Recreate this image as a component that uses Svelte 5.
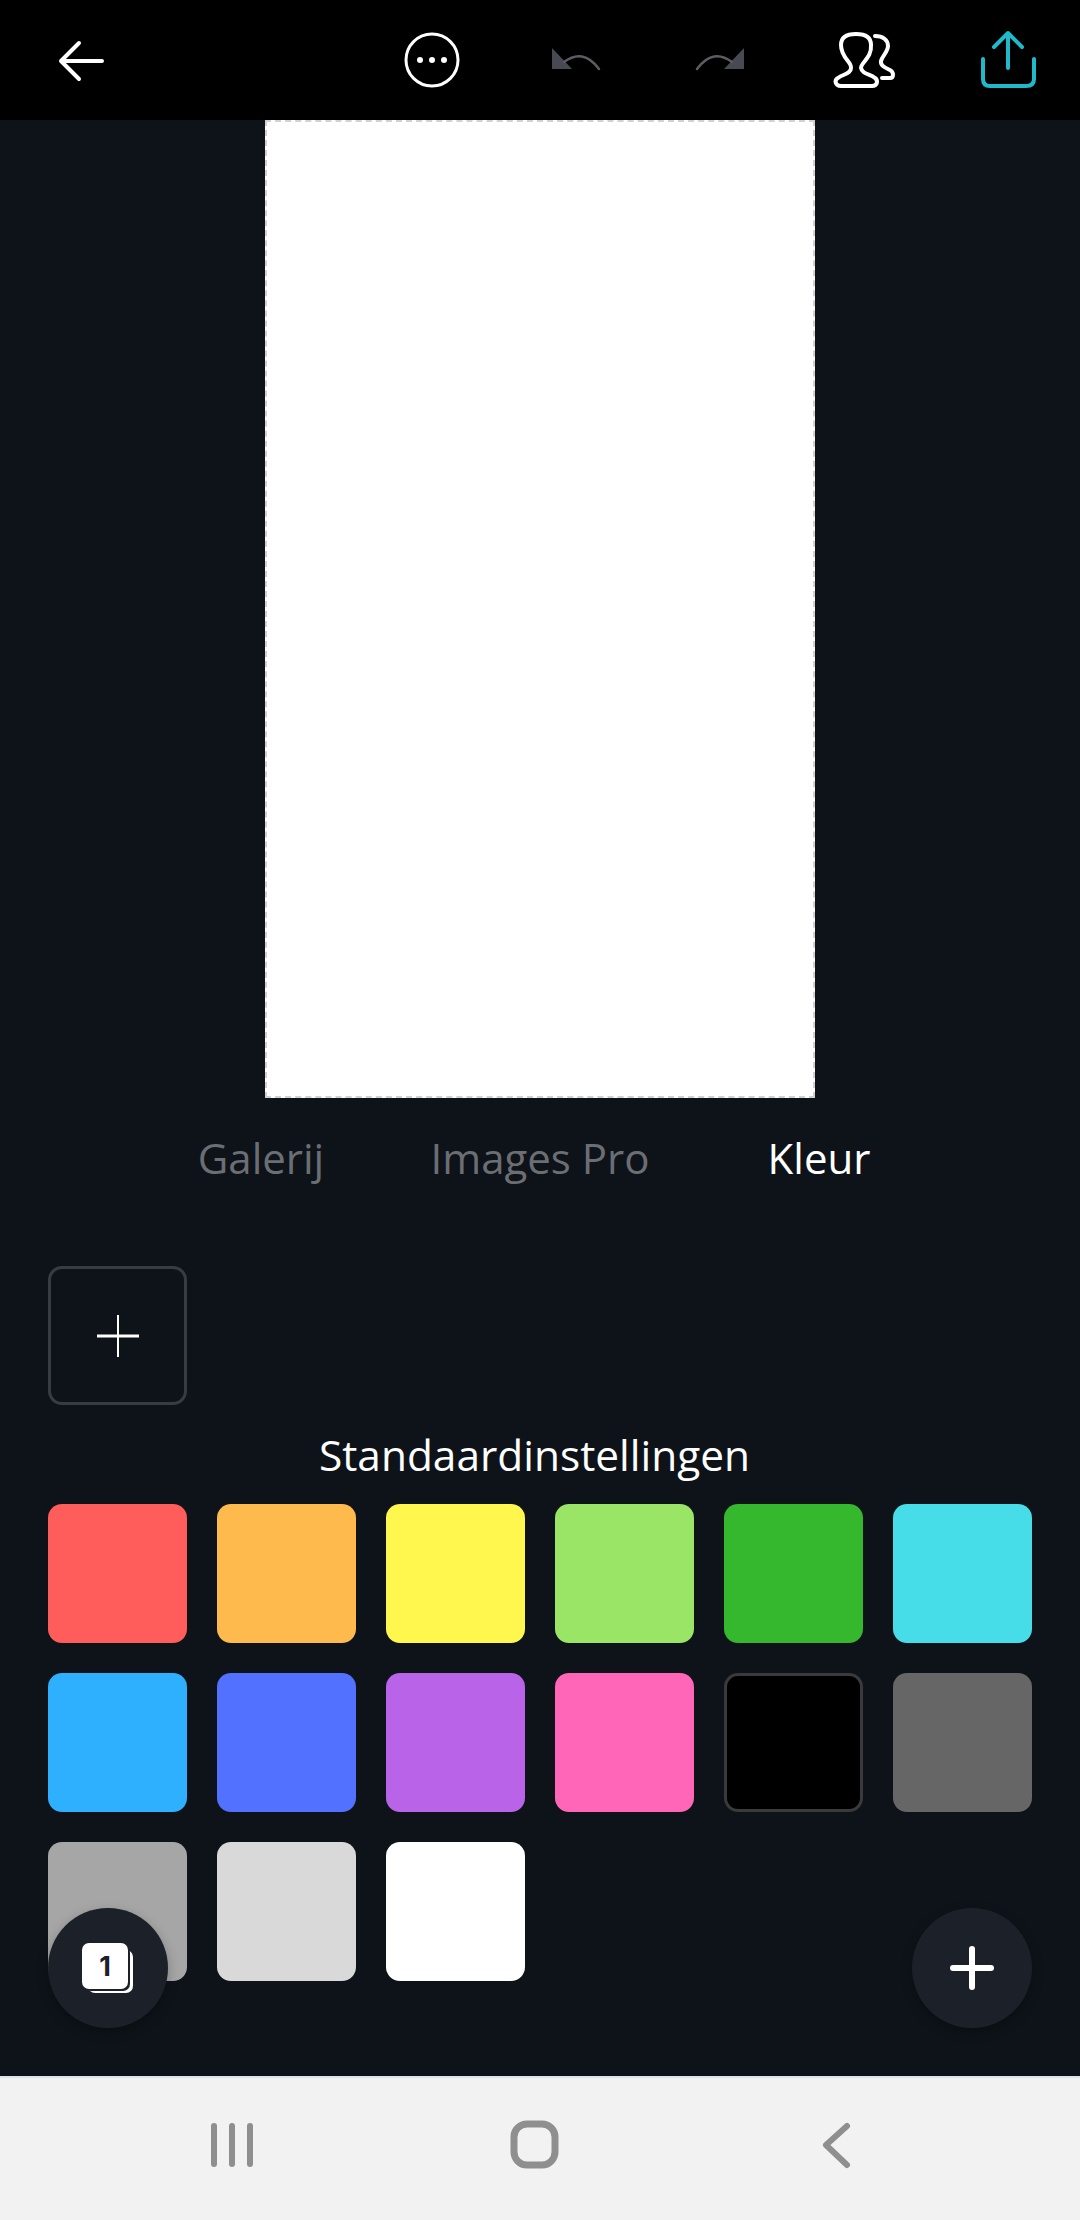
<script>
  const swatches = [
    '#ff5c5c', '#ffba4d', '#fff74d', '#9ae566', '#36b82e', '#47dde8',
    '#2eb0ff', '#5271ff', '#b963e8', '#ff66b8', '#000000', '#666666',
    '#a6a6a6', '#d9d9d9', '#ffffff'
  ];
  const tabs = ['Galerij', 'Images Pro', 'Kleur'];
  let active = 'Kleur';
</script>

<div class="screen">
  <header class="topbar">
    <svg viewBox="0 0 1080 120" width="1080" height="120" fill="none" stroke-linecap="round" stroke-linejoin="round">
      <!-- back -->
      <path d="M102 61H61M79 43L61 61L79 79" stroke="#fff" stroke-width="4" />
      <!-- more -->
      <circle cx="432" cy="60" r="26" stroke="#fff" stroke-width="3" />
      <circle cx="420" cy="60" r="3" fill="#fff" />
      <circle cx="432" cy="60" r="3" fill="#fff" />
      <circle cx="444" cy="60" r="3" fill="#fff" />
      <!-- undo -->
      <path d="M552 48V69H572Z" fill="#474953" />
      <path d="M564 62C576 53 588 54 599 69" stroke="#5c5d63" stroke-width="2.5" />
      <!-- redo -->
      <path d="M744 48V69H724Z" fill="#474953" />
      <path d="M732 62C720 53 708 54 697 69" stroke="#5c5d63" stroke-width="2.5" />
      <!-- people -->
      <path d="M841 86H872C878 86 878 80 875 78C870 74 862 74 861 68C861 62 872 58 871 45C871 37 865 34 856 34C847 34 841 37 841 45C841 58 852 62 851 68C851 74 843 74 838 78C834 80 835 86 841 86Z" stroke="#fff" stroke-width="4" />
      <path d="M875 36C883 36 888 40 888 46C888 52 882 56 881 61C880 66 886 68 890 70C894 72 894 78 890 78H882" stroke="#fff" stroke-width="4" />
      <!-- share -->
      <path d="M1008 68V33M994 47L1008 33L1022 47" stroke="#1fb9c9" stroke-width="4" />
      <path d="M983 59V79C983 84 986 86 990 86H1026C1031 86 1034 84 1034 79V59" stroke="#1fb9c9" stroke-width="4" />
    </svg>
  </header>

  <main class="content">
    <div class="canvas"></div>

    <nav class="tabs">
      {#each tabs as tab}
        <span class="tab" class:active={tab === active}>{tab}</span>
      {/each}
    </nav>

    <section class="colors">
      <button class="addcolor" aria-label="Kleur toevoegen">
        <svg viewBox="0 0 42 42" width="42" height="42" stroke="#fff">
          <path d="M0 21H42" stroke-width="3" />
          <path d="M21 0V42" stroke-width="2" />
        </svg>
      </button>

      <h2>Standaardinstellingen</h2>

      <div class="swatches">
        {#each swatches as color}
          <div class="swatch" class:black={color === '#000000'} style="background: {color}"></div>
        {/each}
      </div>
    </section>

    <button class="fab left" aria-label="Pagina's">
      <span class="pageback"></span>
      <span class="page">1</span>
    </button>
    <button class="fab right" aria-label="Toevoegen">
      <svg viewBox="0 0 44 44" width="44" height="44" stroke="#fff" stroke-width="6" stroke-linecap="round">
        <path d="M3 22H41M22 3V41" />
      </svg>
    </button>
  </main>

  <footer class="navbar">
    <svg viewBox="0 0 1080 144" width="1080" height="144" fill="none" stroke="#8f8f8f" stroke-linecap="round" stroke-linejoin="round">
      <path d="M214 50V88M232 50V88M250 50V88" stroke-width="6" />
      <rect x="514" y="48" width="41" height="41" rx="13" stroke-width="7" />
      <path d="M847 50L826 69L847 89" stroke-width="6" />
    </svg>
  </footer>
</div>

<style>
  :global(body) {
    margin: 0;
    background: #0e1319;
  }

  .screen {
    width: 1080px;
    height: 2220px;
    display: flex;
    flex-direction: column;
    font-family: "Open Sans", sans-serif;
    overflow: hidden;
  }

  .topbar {
    height: 120px;
    background: #000;
    flex: none;
  }

  svg {
    display: block;
  }

  .content {
    position: relative;
    flex: 1;
    background: #0e1319;
  }

  .canvas {
    width: 550px;
    height: 978px;
    margin-left: 265px;
    box-sizing: border-box;
    background: #fff;
    border: 2px dashed #d2d2d2;
  }

  .tabs {
    display: flex;
    justify-content: center;
    margin-top: 33px;
  }

  .tab {
    width: 279px;
    text-align: center;
    color: #6b6e73;
    font-size: 42px;
    line-height: 54px;
  }

  .tab.active {
    color: #fff;
  }

  .colors {
    padding: 0 48px;
  }

  .addcolor {
    display: flex;
    align-items: center;
    justify-content: center;
    width: 139px;
    height: 139px;
    margin-top: 81px;
    padding: 0;
    box-sizing: border-box;
    background: transparent;
    border: 3px solid #383c42;
    border-radius: 14px;
  }

  h2 {
    margin: 23px 11px 22px 0;
    color: #fff;
    font-size: 42.4px;
    line-height: 54px;
    font-weight: 400;
    text-align: center;
  }

  .swatches {
    display: grid;
    grid-template-columns: repeat(6, 139px);
    grid-auto-rows: 139px;
    gap: 30px;
  }

  .swatch {
    border-radius: 14px;
  }

  .swatch.black {
    box-sizing: border-box;
    border: 3px solid #3a3a3a;
  }

  .fab {
    position: absolute;
    top: 1788px;
    width: 120px;
    height: 120px;
    padding: 0;
    display: flex;
    align-items: center;
    justify-content: center;
    background: #1c2129;
    border: 0;
    border-radius: 50%;
    box-shadow: 0 4px 12px rgba(0, 0, 0, 0.25);
  }

  .fab.left {
    left: 48px;
  }

  .fab.right {
    left: 912px;
  }

  .page,
  .pageback {
    position: absolute;
    box-sizing: border-box;
    border-radius: 7px;
    background: #fff;
  }

  .page {
    left: 34px;
    top: 35px;
    width: 46px;
    height: 46px;
    display: flex;
    align-items: center;
    justify-content: center;
    color: #1c2129;
    font-family: "Inter", sans-serif;
    font-size: 27px;
    font-weight: 700;
    box-shadow: 2px 2px 0 #1c2129;
  }

  .pageback {
    left: 40px;
    top: 42px;
    width: 45px;
    height: 43px;
  }

  .navbar {
    height: 144px;
    flex: none;
    background: #f2f2f2;
    box-shadow: inset 0 2px 0 #dfe4ea;
  }
</style>
